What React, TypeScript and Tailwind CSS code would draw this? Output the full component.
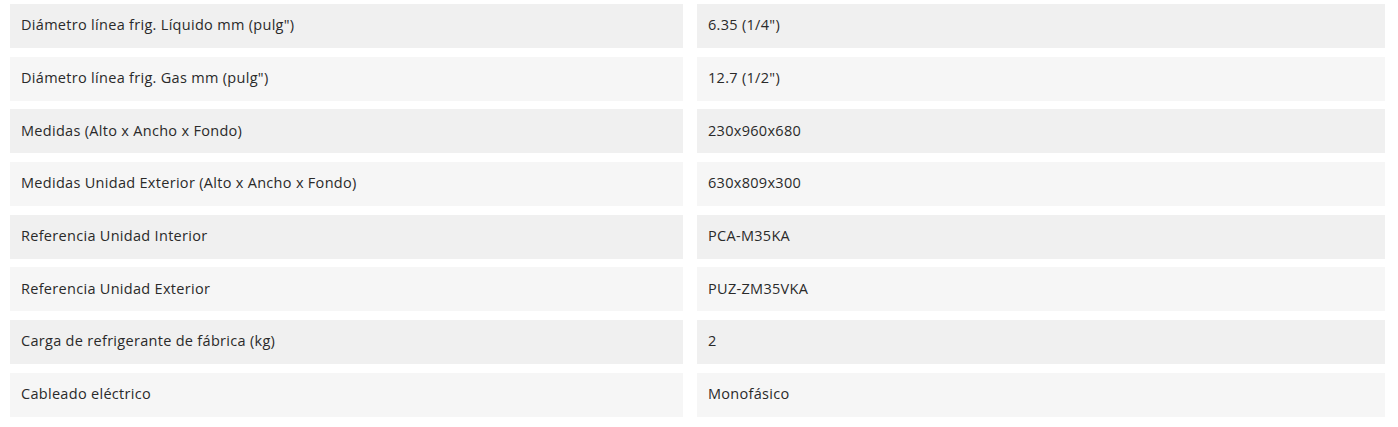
import React from "react";

const rows: [string, string][] = [
  ["Diámetro línea frig. Líquido mm (pulg\")", "6.35 (1/4\")"],
  ["Diámetro línea frig. Gas mm (pulg\")", "12.7 (1/2\")"],
  ["Medidas (Alto x Ancho x Fondo)", "230x960x680"],
  ["Medidas Unidad Exterior (Alto x Ancho x Fondo)", "630x809x300"],
  ["Referencia Unidad Interior", "PCA-M35KA"],
  ["Referencia Unidad Exterior", "PUZ-ZM35VKA"],
  ["Carga de refrigerante de fábrica (kg)", "2"],
  ["Cableado eléctrico", "Monofásico"],
];

export default function App() {
  return (
    <div className="w-[1398px] h-[427px] bg-white pl-[10px] pt-[4px] font-['Open_Sans',sans-serif] text-[14.5px] tracking-[0.3px] text-[#2a2a2a]">
      <div className="grid grid-cols-[673px_688px] gap-x-[14px] gap-y-[8.7px]">
        {rows.map(([k, v], i) => {
          const bg = i % 2 === 0 ? "bg-[#f0f0f0]" : "bg-[#f6f6f6]";
          return (
            <React.Fragment key={i}>
              <div className={`${bg} h-[44px] flex items-center px-[11px] pb-[2px]`}>{k}</div>
              <div className={`${bg} h-[44px] flex items-center px-[11px] pb-[2px]`}>{v}</div>
            </React.Fragment>
          );
        })}
      </div>
    </div>
  );
}
